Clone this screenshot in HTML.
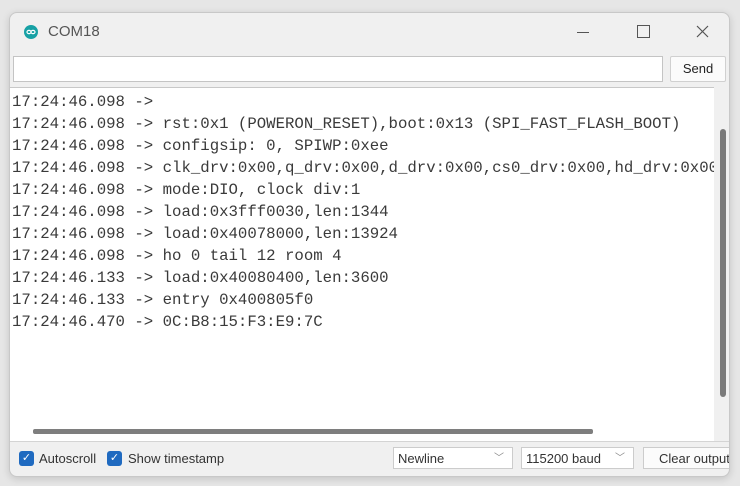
<!DOCTYPE html>
<html><head><style>
body{margin:0;width:740px;height:486px;background:#e6e6e6;position:relative;overflow:hidden;font-family:"Liberation Sans",sans-serif}
.win{position:absolute;left:9px;top:12px;width:719px;height:463px;background:#f0f0f0;border:1px solid #c8c8c8;border-radius:8px;overflow:hidden;box-shadow:0 2px 8px rgba(0,0,0,.15)}
.title{position:absolute;left:38px;top:10px;font-size:15px;color:#555}
.inp{position:absolute;left:3px;top:43px;width:648px;height:24px;background:#fff;border:1px solid #c4c4c4}
.send{position:absolute;left:660px;top:43px;width:54px;height:24px;background:#fbfbfb;border:1px solid #d0d0d0;font-size:13px;text-align:center;line-height:24px;color:#222;border-radius:2px}
.out{position:absolute;left:0;top:74px;width:704px;height:354px;background:#fff;border-top:1px solid #c8c8c8;overflow:hidden}
pre{margin:0;position:absolute;left:2px;top:3px;font-family:"Liberation Mono",monospace;font-size:15.7px;line-height:22px;color:#3a3a3a;white-space:pre}
.vtr{position:absolute;left:704px;top:74px;width:15px;height:354px;background:#f0f0f0}
.vth{position:absolute;left:710px;top:116px;width:6px;height:268px;background:#7a7a7a;border-radius:3px}
.hth{position:absolute;left:23px;top:416px;width:560px;height:5px;background:#7e7e7e;border-radius:2px}
.cb{position:absolute;top:438px;width:15px;height:15px;background:#1f6ac0;border-radius:3px;color:#fff;font-size:11px;text-align:center;line-height:15px}
.lbl{position:absolute;top:438px;font-size:13px;color:#333}
.sel{position:absolute;top:434px;height:22px;background:#fff;border:1px solid #ccc;font-size:13px;line-height:22px;color:#333;box-sizing:border-box;padding-left:4px}
.sel span{position:absolute;right:8px;top:0;color:#888;font-size:10px}
</style></head><body>
<div class="win">
<svg style="position:absolute;left:14px;top:12px" width="14" height="14" viewBox="0 0 14 14"><circle cx="7" cy="7" r="7" fill="#17a1a5"/><ellipse cx="5" cy="7" rx="2" ry="1.6" fill="none" stroke="#fff" stroke-width="1.2"/><ellipse cx="9" cy="7" rx="2" ry="1.6" fill="none" stroke="#fff" stroke-width="1.2"/></svg>
<div class="title">COM18</div>
<div style="position:absolute;left:567px;top:19px;width:12px;height:1px;background:#555"></div>
<div style="position:absolute;left:627px;top:12px;width:11px;height:11px;border:1px solid #555"></div>
<svg style="position:absolute;left:686px;top:12px" width="13" height="13" viewBox="0 0 13 13"><path d="M1 1L12 12M12 1L1 12" stroke="#555" stroke-width="1.2"/></svg>
<div class="inp"></div><div class="send">Send</div>
<div class="out"><pre>17:24:46.098 -&gt;
17:24:46.098 -&gt; rst:0x1 (POWERON_RESET),boot:0x13 (SPI_FAST_FLASH_BOOT)
17:24:46.098 -&gt; configsip: 0, SPIWP:0xee
17:24:46.098 -&gt; clk_drv:0x00,q_drv:0x00,d_drv:0x00,cs0_drv:0x00,hd_drv:0x00,wp_drv:0x00
17:24:46.098 -&gt; mode:DIO, clock div:1
17:24:46.098 -&gt; load:0x3fff0030,len:1344
17:24:46.098 -&gt; load:0x40078000,len:13924
17:24:46.098 -&gt; ho 0 tail 12 room 4
17:24:46.133 -&gt; load:0x40080400,len:3600
17:24:46.133 -&gt; entry 0x400805f0
17:24:46.470 -&gt; 0C:B8:15:F3:E9:7C</pre></div>
<div class="vtr"></div><div class="vth"></div><div class="hth"></div>
<div style="position:absolute;left:0;top:428px;width:719px;height:1px;background:#d4d4d4"></div>
<div class="cb" style="left:9px">✓</div><div class="lbl" style="left:29px">Autoscroll</div>
<div class="cb" style="left:97px">✓</div><div class="lbl" style="left:118px">Show timestamp</div>
<div class="sel" style="left:383px;width:120px">Newline<span>﹀</span></div>
<div class="sel" style="left:511px;width:113px">115200 baud<span>﹀</span></div>
<div class="sel" style="left:633px;width:90px;background:#fbfbfb;padding-left:15px">Clear output</div>
</div>
</body></html>
